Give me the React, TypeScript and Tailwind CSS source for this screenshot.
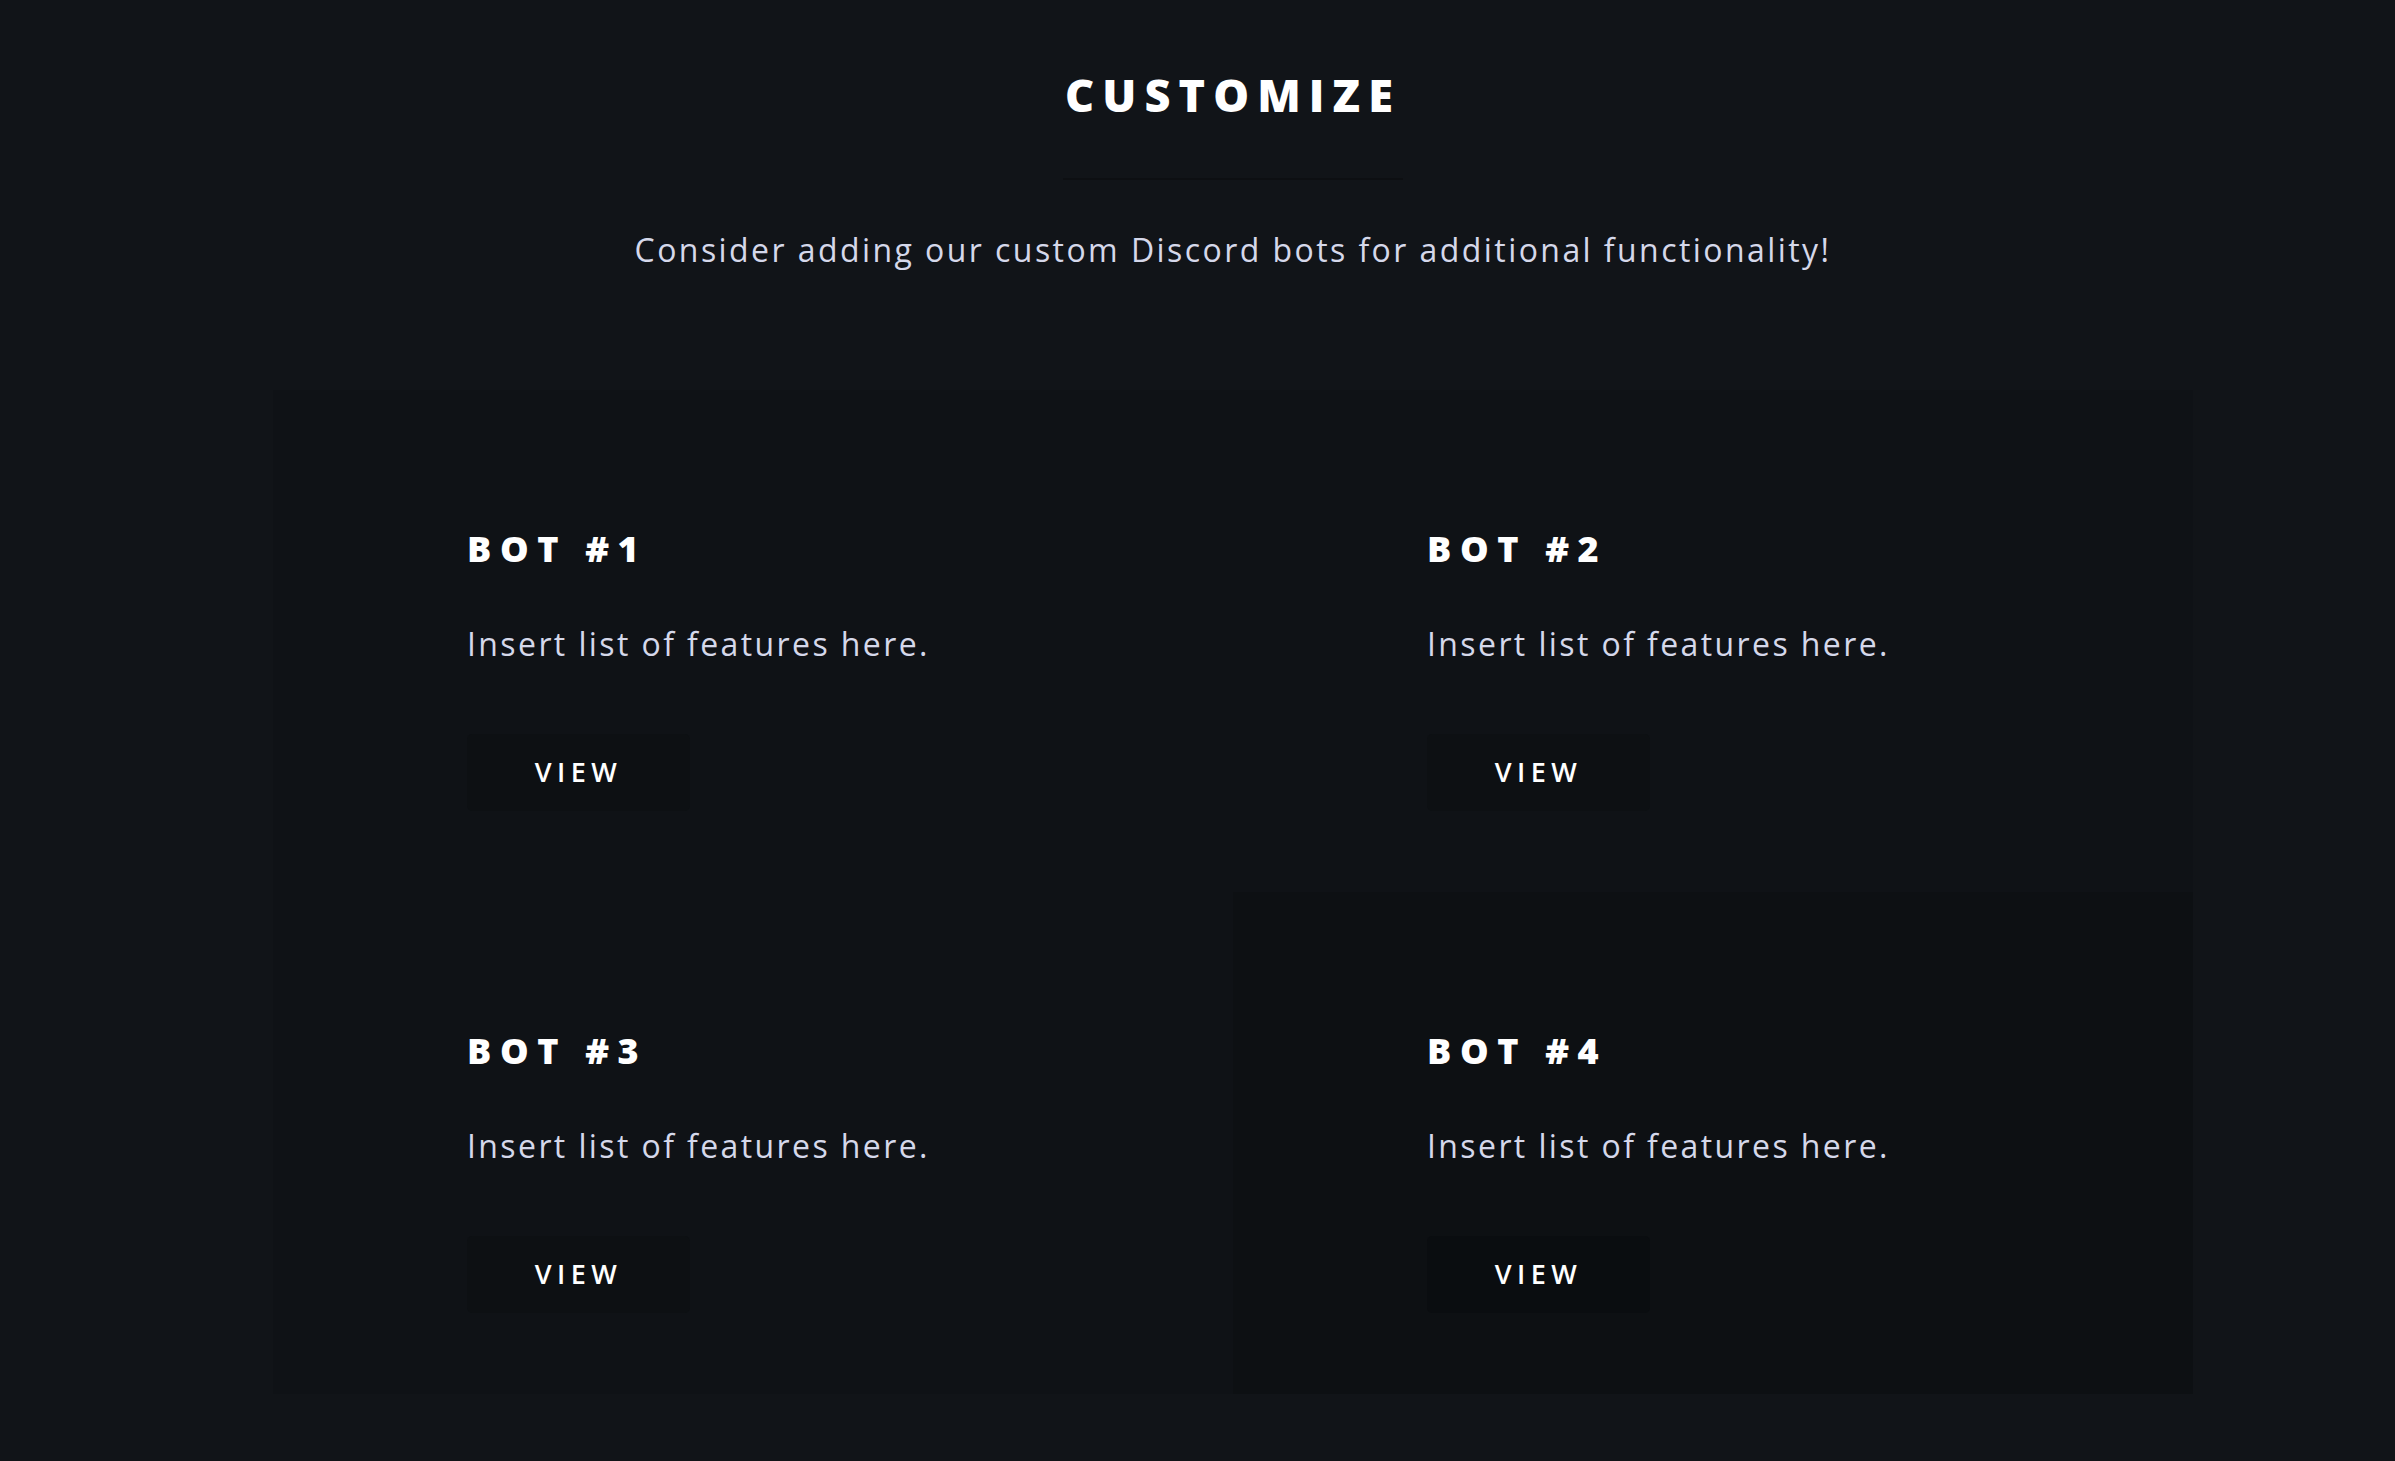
export default function App() {
  const bots = [
    { name: "BOT #1", cell: "bg-[#0f1216]", btn: "bg-[#0d1013]" },
    { name: "BOT #2", cell: "bg-[#0f1216]", btn: "bg-[#0d1013]" },
    { name: "BOT #3", cell: "bg-[#0f1216]", btn: "bg-[#0d1013]" },
    { name: "BOT #4", cell: "bg-[#0d1013]", btn: "bg-[#0a0d10]" },
  ];

  return (
    <div
      className="min-h-screen bg-[#111418] pl-[273px] pt-[72px] pb-[68px]"
      style={{ fontFamily: '"Open Sans", "Liberation Sans", sans-serif' }}
    >
      <div className="w-[1920px]">
        <div className="flex flex-col items-center">
          <h1 className="text-[45px] leading-[45px] font-extrabold tracking-[0.18em] text-white">
            CUSTOMIZE
          </h1>
          <div className="mt-[61px] h-[2px] w-[340px] bg-[#0d0f12]" />
          <p className="mt-[54px] text-[32px] leading-[32px] tracking-[0.076em] text-[#d5d8ea]">
            Consider adding our custom Discord bots for additional functionality!
          </p>
        </div>

        <div className="mt-[124px] grid grid-cols-2">
          {bots.map((bot) => (
            <div key={bot.name} className={`h-[502px] pl-[194px] pt-[141px] ${bot.cell}`}>
              <h2 className="text-[36px] leading-[36px] font-extrabold tracking-[0.24em] text-white">
                {bot.name}
              </h2>
              <p className="mt-[61px] text-[32px] leading-[32px] tracking-[0.075em] text-[#d5d8ea]">
                Insert list of features here.
              </p>
              <button
                className={`mt-[74px] flex h-[77px] w-[223px] items-center justify-center rounded-[5px] text-[27px] font-semibold tracking-[0.2em] text-white ${bot.btn}`}
              >
                VIEW
              </button>
            </div>
          ))}
        </div>
      </div>
    </div>
  );
}
